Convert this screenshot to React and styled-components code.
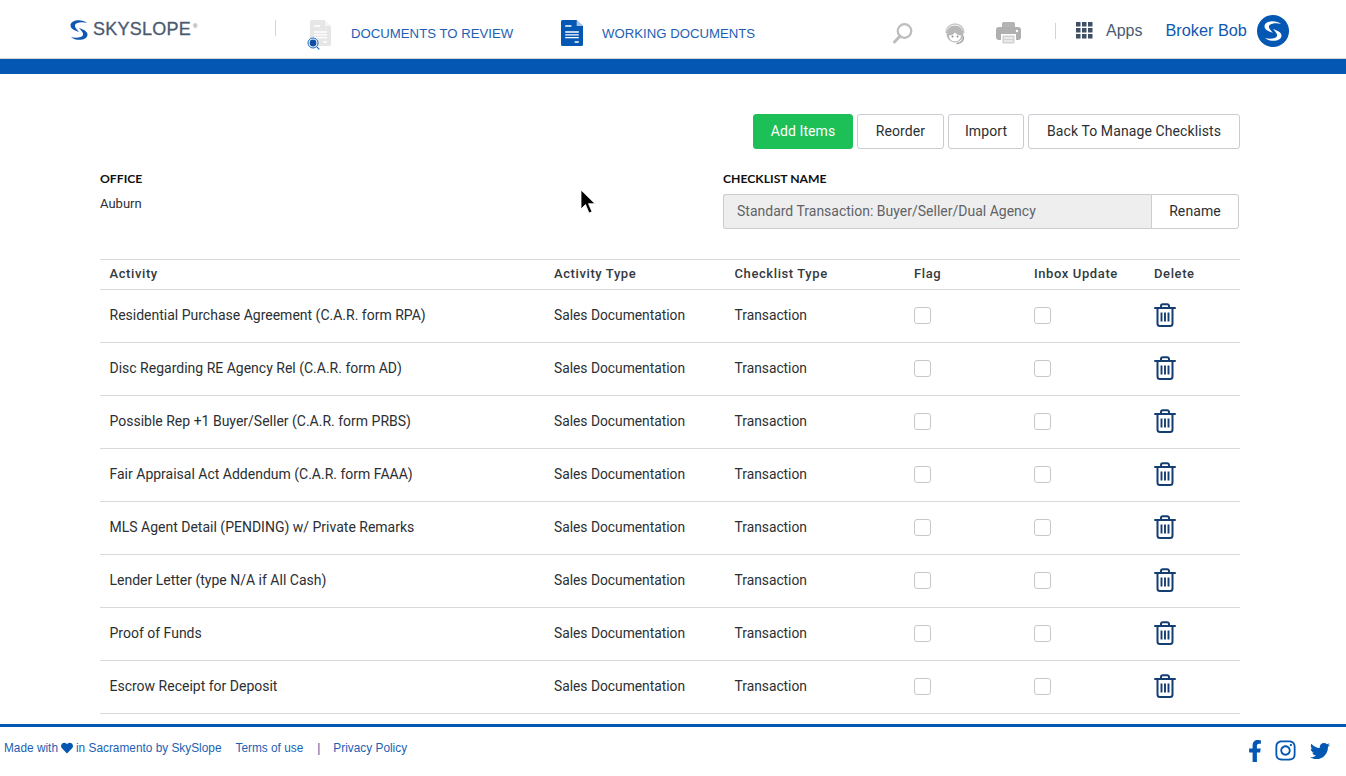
import React from 'react';
import styled, { createGlobalStyle } from 'styled-components';
import { FaFacebookF, FaInstagram, FaTwitter, FaHeart } from 'react-icons/fa';

const GlobalStyle = createGlobalStyle`
  html, body { margin: 0; padding: 0; height: 100%; background: #fff; }
  body { font-family: Roboto, "Liberation Sans", sans-serif; overflow: hidden; }
  * { box-sizing: border-box; }
`;

const Page = styled.div`
  position: relative;
  height: 776px;
  display: flex;
  flex-direction: column;
  overflow: hidden;
`;

const Header = styled.header`
  flex: none;
  height: 59px;
  display: flex;
  align-items: center;
  border-bottom: 1px solid #d4d4d4;
  font-family: "Liberation Sans", Arial, sans-serif;
`;

const Logo = styled.div`
  width: 275px;
  padding: 1px 0 0 67px;
  display: flex;
  align-items: center;
  gap: 2px;
  color: #4a5a70;
  font-size: 18px;
  letter-spacing: 0.25px;
  -webkit-text-stroke: 0.3px #4a5a70;
  white-space: nowrap;
  sup { font-size: 6px; margin: -8px 0 0 0; letter-spacing: 0; -webkit-text-stroke: 0; }
`;

const Divider = styled.span`
  flex: none;
  width: 1px;
  height: 16px;
  background: #cfd4da;
  margin-bottom: 3px;
`;

const NavLink = styled.a`
  display: flex;
  align-items: center;
  margin: 8px 0 0 ${p => p.$gap}px;
  width: ${p => p.$width}px;
  gap: ${p => p.$iconGap}px;
  color: #1e5fb4;
  font-size: 13.2px;
  white-space: nowrap;
`;

const DocWrap = styled.span`
  position: relative;
  display: flex;
`;

const Lens = styled.svg`
  position: absolute;
  left: -3px;
  bottom: -4px;
`;

const HeaderTools = styled.div`
  display: flex;
  align-items: center;
  margin-top: 8px;
  gap: 30px;
  svg { display: block; }
`;

const Apps = styled.div`
  display: flex;
  align-items: center;
  gap: 13px;
  margin: 3px 0 0 34px;
  color: #4a5a70;
  font-size: 16px;
  ${Divider} { margin: 0 7px 0 0; }
`;

const UserName = styled.div`
  display: flex;
  align-items: center;
  gap: 10px;
  margin: 3px 0 0 23px;
  color: #0f57b0;
  font-size: 16.3px;
`;

const Avatar = styled.span`
  width: 32px;
  height: 32px;
  border-radius: 50%;
  background: #0457b3;
  display: flex;
  align-items: center;
  justify-content: center;
`;

const BlueBar = styled.div`
  flex: none;
  height: 15px;
  background: #0457b3;
`;

const Main = styled.main`
  flex: 1;
  min-height: 0;
  overflow: hidden;
  padding: 40px 106px 0 100px;
`;

const Actions = styled.div`
  display: flex;
  justify-content: flex-end;
  gap: 4px;
  height: 36px;
`;

const Button = styled.button`
  height: 35px;
  width: ${p => p.$width}px;
  padding: 0 0 1px;
  font-family: Roboto, sans-serif;
  font-size: 14px;
  letter-spacing: 0.1px;
  color: ${p => (p.$primary ? '#fff' : '#2b2f33')};
  background: ${p => (p.$primary ? '#1dbf57' : '#fff')};
  border: 1px solid ${p => (p.$primary ? '#1dbf57' : '#c9ccd1')};
  border-radius: 3px;
`;

const FormRow = styled.div`
  display: flex;
  justify-content: space-between;
  margin-top: 22px;
`;

const Field = styled.div`
  width: ${p => p.$width};
  margin-right: ${p => p.$right || 0}px;
`;

const Label = styled.div`
  font-family: Lato, sans-serif;
  font-weight: 700;
  font-size: 12.2px;
  line-height: 14px;
  color: #111;
`;

const Office = styled.div`
  margin-top: 10px;
  font-size: 13px;
  line-height: 16px;
  color: #2b2f33;
`;

const InputGroup = styled.div`
  display: flex;
  margin-top: 8px;
  height: 35px;
`;

const Input = styled.div`
  flex: 1;
  display: flex;
  align-items: center;
  padding: 0 0 1px 13px;
  font-size: 14px;
  color: #5f6368;
  background: #eeeeee;
  border: 1px solid #c9ccd1;
  border-right: 0;
  border-radius: 3px 0 0 3px;
`;

const Rename = styled(Button)`
  width: 88px;
  border-radius: 0 3px 3px 0;
`;

const Grid = styled.div`
  display: grid;
  grid-template-columns: 444.5px 180.5px 179.5px 120px 120px 1fr;
  align-items: center;
  padding: 0 0 2px 9.5px;
  height: ${p => (p.$head ? 31 : 53)}px;
  border-bottom: 1px solid #d9d9d9;
  font-size: 13.8px;
  color: #2b2f33;
  ${p => p.$head && `
    margin-top: 30px;
    border-top: 1px solid #d9d9d9;
    font-weight: 500;
    font-size: 13px;
    letter-spacing: 0.6px;
    color: #343a40;
  `}
`;

const ActivityName = styled.span`
  font-size: 14px;
`;

const Check = styled.span`
  display: block;
  width: 17px;
  height: 17px;
  border: 1px solid #c6c8cc;
  border-radius: 3px;
  background: #fff;
`;

const Footer = styled.footer`
  flex: none;
  height: 52px;
  border-top: 3px solid #0457b3;
  background: #fff;
  display: flex;
  align-items: flex-start;
  padding: 14px 16px 0 4px;
  font-family: "Liberation Sans", Arial, sans-serif;
  font-size: 11.85px;
  line-height: 14px;
  color: #1e5fb4;
`;

const FootLink = styled.span`
  margin-left: ${p => p.$gap}px;
  display: inline-flex;
  align-items: center;
  gap: 3px;
  white-space: nowrap;
`;

const Social = styled.div`
  margin: -2px 0 0 auto;
  display: flex;
  align-items: center;
  gap: 13px;
  color: #0457b3;
  svg:first-child { margin-right: -5px; }
`;

const Cursor = styled.svg`
  position: absolute;
  left: 580px;
  top: 189px;
`;

const SkyMark = ({ size = 22, color = '#0f57b0' }) => (
  <svg width={size} height={size} viewBox="0 0 24 24" fill={color}>
    <path d="M20 5C15 .5 4 1.500 3.500 7c-.3 4 4.500 5.500 8.500 7-3-3.500-4.500-5-4-7 .8-2.500 7-3.500 12-2z" />
    <path d="M4 19c5 4.500 16 3.500 16.500-2 .3-4-4.500-5.500-8.500-7 3 3.500 4.500 5 4 7-.8 2.500-7 3.500-12 2z" />
  </svg>
);

const DocIcon = ({ fill, line, width = 21, height = 26 }) => (
  <svg width={width} height={height} viewBox="0 0 21 26" preserveAspectRatio="none">
    <path d="M1.500 0H15l6 6v18.500a1.500 1.500 0 0 1-1.500 1.500h-18A1.500 1.500 0 0 1 0 24.500v-23A1.500 1.500 0 0 1 1.500 0z" fill={fill} />
    <path d="M15 0l6 6h-6z" fill="#fff" opacity=".65" />
    <path d="M4 6h6M4 12h13M4 14.800h13M4 17.600h13M13 22h4" stroke={line} strokeWidth="1.300" />
  </svg>
);

const SearchIcon = () => (
  <svg width="22" height="22" viewBox="0 0 22 22" fill="none" stroke="#bdbdbd">
    <circle cx="12.500" cy="9" r="6.800" strokeWidth="2.200" />
    <path d="M8 14l-5.500 6" strokeWidth="3" strokeLinecap="round" />
  </svg>
);

const SupportIcon = () => (
  <svg width="22" height="24" viewBox="0 0 22 24" fill="none">
    <path d="M2 12a9 9 0 0 1 18 0" stroke="#c8c8c8" strokeWidth="1.500" />
    <circle cx="11" cy="13" r="8.500" fill="#b8b8b8" />
    <path d="M5 14.500c2.500 0 4.500-1 6-3 1.500 2 3.500 3 6 3 0 3.500-2.500 5.800-6 5.800s-6-2.300-6-5.800z" fill="#fff" />
    <circle cx="8.500" cy="15.500" r="1" fill="#8c8c8c" />
    <circle cx="13.500" cy="15.500" r="1" fill="#8c8c8c" />
    <path d="M19.500 16c0 4-3 6-6.500 6.500" stroke="#9a9a9a" strokeWidth="1.300" strokeLinecap="round" />
  </svg>
);

const PrinterIcon = () => (
  <svg width="25" height="24" viewBox="0 0 25 24">
    <path d="M6 2.500A1.500 1.500 0 0 1 7.500 1h10A1.500 1.500 0 0 1 19 2.500V7H6z" fill="#b4b4b4" />
    <rect x="0" y="6" width="25" height="13" rx="3" fill="#b0b0b0" />
    <path d="M5 13h15v11H5z" fill="#fff" />
    <path d="M6.500 14.500h12v8h-12z" fill="#d2d2d2" />
    <path d="M8 17h9M8 20h9" stroke="#fff" strokeWidth="1" />
    <circle cx="21" cy="10" r="1.200" fill="#fff" />
  </svg>
);

const AppsIcon = () => (
  <svg width="17" height="17" viewBox="0 0 17 17" fill="#3f4f66">
    {[0, 6, 12].flatMap(y => [0, 6, 12].map(x => <rect key={`${x}-${y}`} x={x} y={y} width="4.500" height="4.500" />))}
  </svg>
);

const TrashIcon = () => (
  <svg width="22" height="24" viewBox="0 0 22 24" fill="none" stroke="#143d72" strokeWidth="2">
    <path d="M1 5h20" strokeLinecap="round" />
    <path d="M7 5V3a1.800 1.800 0 0 1 1.800-1.800h4.400A1.800 1.800 0 0 1 15 3v2" />
    <path d="M3.500 5v15.500A2.500 2.500 0 0 0 6 23h10a2.500 2.500 0 0 0 2.500-2.500V5" />
    <path d="M7.500 9.500v9M11 9.500v9M14.500 9.500v9" strokeWidth="1.900" />
  </svg>
);

const activities = [
  'Residential Purchase Agreement (C.A.R. form RPA)',
  'Disc Regarding RE Agency Rel (C.A.R. form AD)',
  'Possible Rep +1 Buyer/Seller (C.A.R. form PRBS)',
  'Fair Appraisal Act Addendum (C.A.R. form FAAA)',
  'MLS Agent Detail (PENDING) w/ Private Remarks',
  'Lender Letter (type N/A if All Cash)',
  'Proof of Funds',
  'Escrow Receipt for Deposit',
];

const App = () => (
  <Page>
    <GlobalStyle />
    <Header>
      <Logo>
        <SkyMark size={24} />
        SKYSLOPE<sup>®</sup>
      </Logo>
      <Divider />
      <NavLink $gap={34} $width={238} $iconGap={20}>
        <DocWrap>
          <DocIcon fill="#e6e6e6" line="#fff" />
          <Lens width="13" height="13" viewBox="0 0 13 13" fill="#fff" stroke="#1668c0">
            <circle cx="6" cy="6" r="5" strokeWidth="1" />
            <circle cx="6" cy="6" r="3.400" fill="#0f4fa0" stroke="none" />
            <path d="M9.800 9.800l2.500 2.500" strokeWidth="1.200" />
          </Lens>
        </DocWrap>
        DOCUMENTS TO REVIEW
      </NavLink>
      <NavLink $gap={13} $width={331} $iconGap={19}>
        <DocWrap>
          <DocIcon fill="#0457b3" line="#fff" width={22} height={26} />
        </DocWrap>
        WORKING DOCUMENTS
      </NavLink>
      <HeaderTools>
        <SearchIcon />
        <SupportIcon />
        <PrinterIcon />
      </HeaderTools>
      <Apps>
        <Divider />
        <AppsIcon />
        Apps
      </Apps>
      <UserName>
        Broker Bob
        <Avatar>
          <SkyMark size={24} color="#fff" />
        </Avatar>
      </UserName>
    </Header>
    <BlueBar />
    <Main>
      <Actions>
        <Button $primary $width={100}>Add Items</Button>
        <Button $width={87}>Reorder</Button>
        <Button $width={76}>Import</Button>
        <Button $width={212}>Back To Manage Checklists</Button>
      </Actions>
      <FormRow>
        <Field $width="300px">
          <Label>OFFICE</Label>
          <Office>Auburn</Office>
        </Field>
        <Field $width="516px" $right={1}>
          <Label>CHECKLIST NAME</Label>
          <InputGroup>
            <Input>Standard Transaction: Buyer/Seller/Dual Agency</Input>
            <Rename>Rename</Rename>
          </InputGroup>
        </Field>
      </FormRow>
      <Grid $head>
        <span>Activity</span>
        <span>Activity Type</span>
        <span>Checklist Type</span>
        <span>Flag</span>
        <span>Inbox Update</span>
        <span>Delete</span>
      </Grid>
      {activities.map(name => (
        <Grid key={name}>
          <ActivityName>{name}</ActivityName>
          <span>Sales Documentation</span>
          <span>Transaction</span>
          <Check />
          <Check />
          <TrashIcon />
        </Grid>
      ))}
    </Main>
    <Footer>
      <FootLink $gap={0}>Made with <FaHeart size={12} color="#0457b3" /> in Sacramento by SkySlope</FootLink>
      <FootLink $gap={14}>Terms of use</FootLink>
      <FootLink $gap={14}>|</FootLink>
      <FootLink $gap={13}>Privacy Policy</FootLink>
      <Social>
        <FaFacebookF size={22} />
        <FaInstagram size={23} />
        <FaTwitter size={20} />
      </Social>
    </Footer>
    <Cursor width="16" height="26" viewBox="0 0 16 26">
      <path d="M1 1v19l4.500-4.500L9 24l3-1.300-3.500-8H15z" fill="#000" stroke="#fff" strokeWidth=".8" />
    </Cursor>
  </Page>
);

export default App;
